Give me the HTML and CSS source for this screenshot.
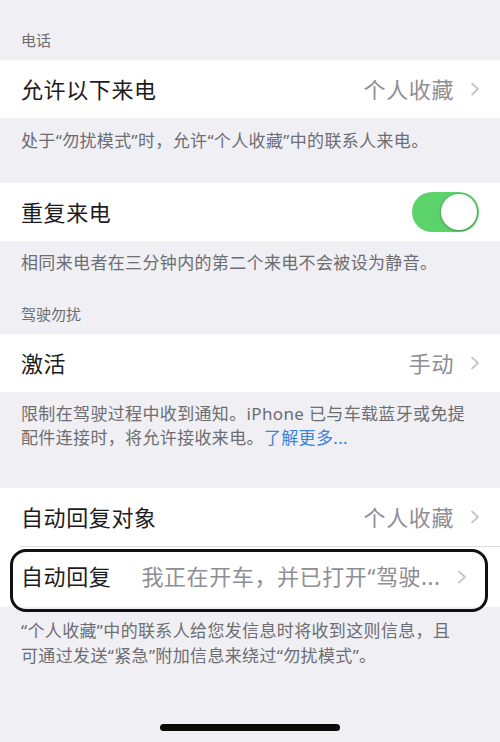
FILE: index.html
```html
<!DOCTYPE html>
<html lang="zh-CN">
<head>
<meta charset="utf-8">
<title>勿扰模式</title>
<link rel="stylesheet" href="styles.css">
</head>
<body>
<div class="screen">
  <div class="section-title first">电话</div>
  <div class="group">
    <div class="row">
      <span class="label">允许以下来电</span>
      <span class="value">个人收藏</span>
      <svg class="chev" viewBox="0 0 10 14"><path d="M2 1.5 L8 7 L2 12.5" /></svg>
    </div>
  </div>
  <div class="footer f1">处于“勿扰模式”时，允许“个人收藏”中的联系人来电。</div>

  <div class="group">
    <div class="row">
      <span class="label">重复来电</span>
      <span class="toggle"><span class="knob"></span></span>
    </div>
  </div>
  <div class="footer f2">相同来电者在三分钟内的第二个来电不会被设为静音。</div>

  <div class="section-title">驾驶勿扰</div>
  <div class="group">
    <div class="row">
      <span class="label">激活</span>
      <span class="value">手动</span>
      <svg class="chev" viewBox="0 0 10 14"><path d="M2 1.5 L8 7 L2 12.5" /></svg>
    </div>
  </div>
  <div class="footer f3">限制在驾驶过程中收到通知。iPhone 已与车载蓝牙或免提配件连接时，将允许接收来电。<span class="link">了解更多...</span></div>

  <div class="group">
    <div class="row">
      <span class="label">自动回复对象</span>
      <span class="value">个人收藏</span>
      <svg class="chev" viewBox="0 0 10 14"><path d="M2 1.5 L8 7 L2 12.5" /></svg>
    </div>
    <div class="row sep highlighted">
      <span class="label">自动回复</span>
      <span class="value">我正在开车，并已打开“驾驶...</span>
      <svg class="chev" viewBox="0 0 10 14"><path d="M2 1.5 L8 7 L2 12.5" /></svg>
      <span class="outline"></span>
    </div>
  </div>
  <div class="footer f4">“个人收藏”中的联系人给您发信息时将收到这则信息，且可通过发送“紧急”附加信息来绕过“勿扰模式”。</div>

  <div class="home-area"><span class="home-bar"></span></div>
</div>
</body>
</html>
```

FILE: styles.css
```css
* { box-sizing: border-box; }
html, body {
  margin: 0;
  padding: 0;
  background: #efeff4;
}
body {
  font-family: "Noto Sans", "Noto Sans CJK SC", sans-serif;
  width: 500px;
  height: 742px;
  overflow: hidden;
}
.screen {
  display: flex;
  flex-direction: column;
  height: 742px;
}
.section-title {
  font-size: 15px;
  line-height: 20px;
  color: #6d6d72;
  padding: 10px 21px 10px;
}
.section-title.first {
  padding-top: 30px;
}
.group {
  background: #fff;
}
.row {
  position: relative;
  height: 58px;
  display: flex;
  align-items: center;
  padding: 0 20px 0 21px;
}
.row.sep {
  height: 61px;
}
.row.sep::before {
  content: "";
  position: absolute;
  left: 20px;
  right: 0;
  top: 0;
  height: 1px;
  background: #dcdce0;
}
.label {
  font-size: 22px;
  color: #1c1c1e;
  letter-spacing: 0.6px;
  white-space: nowrap;
  margin-top: -3px;
}
.value {
  margin-left: auto;
  font-size: 22px;
  color: #8e8e93;
  letter-spacing: 0.6px;
  white-space: nowrap;
  margin-top: -3px;
}
.highlighted .value {
  margin-left: 30px;
}
.chev {
  width: 10px;
  height: 14px;
  margin-left: 16px;
  flex: none;
}
.chev path {
  fill: none;
  stroke: #c4c4c9;
  stroke-width: 1.8;
  stroke-linecap: round;
  stroke-linejoin: round;
}
.toggle {
  margin-left: auto;
  margin-right: 1px;
  width: 67px;
  height: 40px;
  border-radius: 20px;
  background: #5cd36a;
  position: relative;
  flex: none;
}
.knob {
  position: absolute;
  right: 2px;
  top: 2px;
  width: 36px;
  height: 36px;
  border-radius: 50%;
  background: #fff;
  box-shadow: 0 1px 3px rgba(0,0,0,0.25), 0 0 0 1px rgba(0,0,0,0.08);
}
.footer {
  font-size: 17px;
  line-height: 24px;
  color: #6d6d72;
  letter-spacing: 0.35px;
  padding: 10px 20px 0 21px;
}
.f1 { height: 65px; padding-top: 11px; }
.f2 { height: 53px; }
.f3 { height: 96px; }
.f4 { padding-top: 11px; padding-right: 36px; line-height: 25px; }
.link { color: #3b82d8; }
.outline {
  position: absolute;
  left: 10px;
  right: 12px;
  top: 3px;
  bottom: -5px;
  border: 3px solid #111;
  border-radius: 16px;
  pointer-events: none;
}
.home-area {
  flex: 1;
  display: flex;
  justify-content: center;
  align-items: flex-end;
  padding-bottom: 11px;
}
.home-bar {
  width: 180px;
  height: 7px;
  border-radius: 4px;
  background: #0a0a0a;
}
```
